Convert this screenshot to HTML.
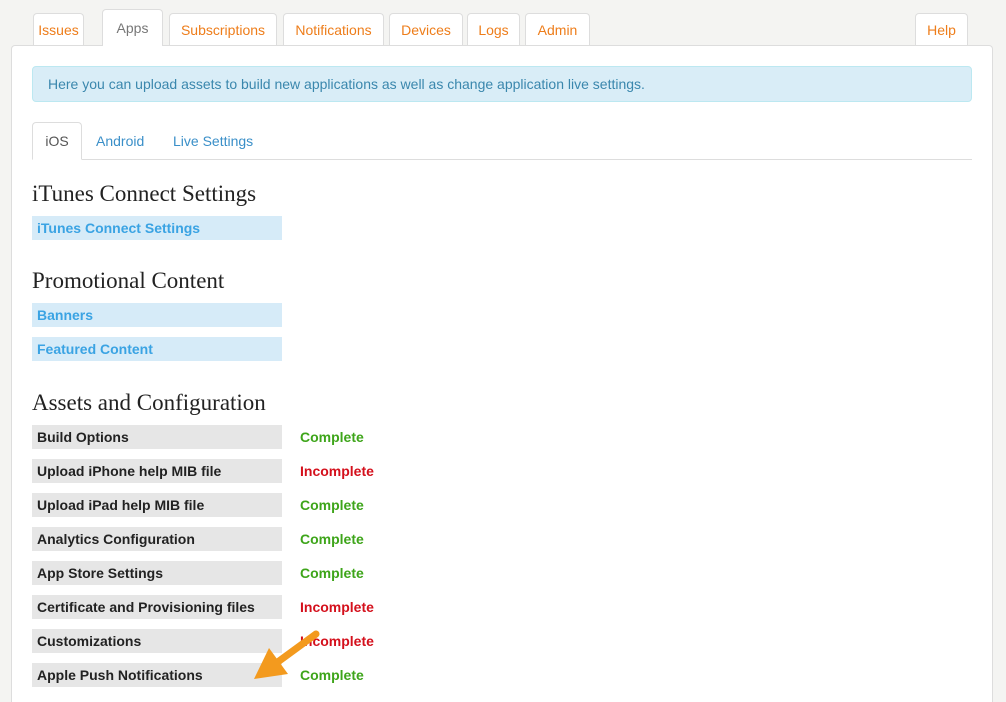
<!DOCTYPE html>
<html style="height:702px;overflow:hidden"><head><style>
body{margin:0;width:1006px;height:702px;background:#f4f4f2;font-family:"Liberation Sans",sans-serif;position:relative;overflow:hidden}
.tab{position:absolute;top:13px;height:32px;background:#fff;border:1px solid #ddd;border-bottom:none;border-radius:4px 4px 0 0;box-sizing:border-box;color:#ee7d1a;font-size:14px;text-align:center;line-height:32px}
.panel{position:absolute;left:11px;top:45px;width:982px;height:657px;background:#fff;border:1px solid #ddd;border-bottom:none;border-radius:4px 4px 0 0;box-sizing:border-box}
.alert{position:absolute;left:32px;top:66px;width:940px;height:36px;background:#d9edf7;border:1px solid #bce8f1;border-radius:4px;box-sizing:border-box;color:#3a87ad;font-size:14px;line-height:34px;padding-left:15px}
.sub{position:absolute;top:122px;height:38px;line-height:38px;font-size:14px;color:#3a8fc8}
h2{position:absolute;left:32px;margin:0;font-family:"Liberation Serif",serif;font-weight:normal;font-size:23px;color:#222}
.lnk{position:absolute;left:32px;width:250px;height:24px;background:#d6ebf8;color:#3aa3e3;font-weight:bold;font-size:14px;line-height:24px;padding-left:5px;box-sizing:border-box}
.row{position:absolute;left:32px;width:250px;height:24px;background:#e6e6e6;color:#222;font-weight:bold;font-size:14px;line-height:24px;padding-left:5px;box-sizing:border-box}
.st{position:absolute;left:300px;font-weight:bold;font-size:14px;line-height:24px}
.c{color:#3ea51a}.i{color:#d4101c}
</style></head><body>
<div class="panel"></div>
<div class="tab" style="left:33px;width:51px">Issues</div>
<div class="tab" style="left:102px;top:9px;height:37px;width:61px;color:#777;line-height:36px">Apps</div>
<div class="tab" style="left:169px;width:108px">Subscriptions</div>
<div class="tab" style="left:283px;width:101px">Notifications</div>
<div class="tab" style="left:389px;width:74px">Devices</div>
<div class="tab" style="left:467px;width:53px">Logs</div>
<div class="tab" style="left:525px;width:65px">Admin</div>
<div class="tab" style="left:915px;width:53px">Help</div>
<div class="alert">Here you can upload assets to build new applications as well as change application live settings.</div>
<div style="position:absolute;left:32px;top:159px;width:940px;height:1px;background:#ddd"></div>
<div class="sub" style="left:32px;width:50px;background:#fff;border:1px solid #ddd;border-bottom:1px solid #fff;border-radius:4px 4px 0 0;box-sizing:border-box;color:#555;text-align:center;line-height:36px">iOS</div>
<div class="sub" style="left:96px">Android</div>
<div class="sub" style="left:173px">Live Settings</div>
<h2 style="top:181px">iTunes Connect Settings</h2>
<div class="lnk" style="top:216px">iTunes Connect Settings</div>
<h2 style="top:268px">Promotional Content</h2>
<div class="lnk" style="top:303px">Banners</div>
<div class="lnk" style="top:337px">Featured Content</div>
<h2 style="top:390px">Assets and Configuration</h2>
<div class="row" style="top:425px">Build Options</div><div class="st c" style="top:425px">Complete</div>
<div class="row" style="top:459px">Upload iPhone help MIB file</div><div class="st i" style="top:459px">Incomplete</div>
<div class="row" style="top:493px">Upload iPad help MIB file</div><div class="st c" style="top:493px">Complete</div>
<div class="row" style="top:527px">Analytics Configuration</div><div class="st c" style="top:527px">Complete</div>
<div class="row" style="top:561px">App Store Settings</div><div class="st c" style="top:561px">Complete</div>
<div class="row" style="top:595px">Certificate and Provisioning files</div><div class="st i" style="top:595px">Incomplete</div>
<div class="row" style="top:629px">Customizations</div><div class="st i" style="top:629px">Incomplete</div>
<div class="row" style="top:663px">Apple Push Notifications</div><div class="st c" style="top:663px">Complete</div>
<svg style="position:absolute;left:0;top:0" width="1006" height="702">
<line x1="316" y1="634" x2="275" y2="664" stroke="#f39a1e" stroke-width="7" stroke-linecap="round"/>
<polygon points="254,679 269,648 288,674" fill="#f39a1e"/>
</svg>
</body></html>
